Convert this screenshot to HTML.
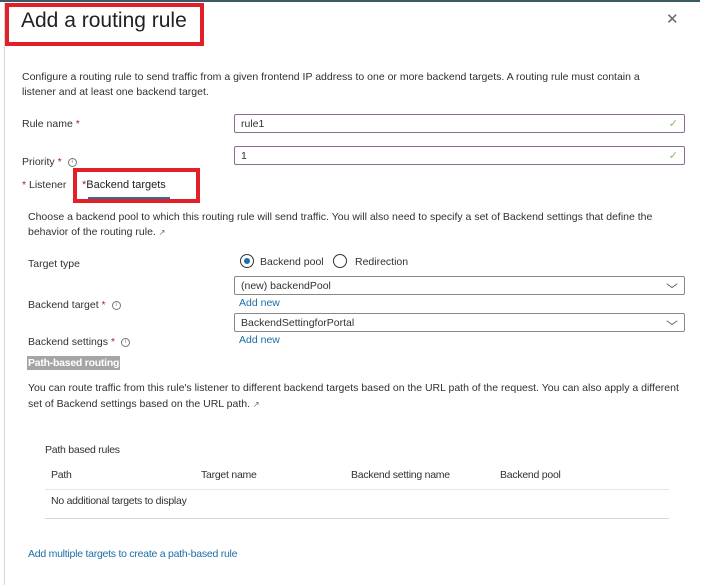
<!DOCTYPE html>
<html><head><meta charset="utf-8"><style>
*{margin:0;padding:0;box-sizing:border-box}
body{width:720px;height:585px;background:#fff;font-family:"Liberation Sans",sans-serif;color:#323130;position:relative;overflow:hidden;font-size:10.5px}
.a{position:absolute;white-space:nowrap}
.red{position:absolute;border:4px solid #e3202a}
.inp{position:absolute;border:1px solid #8a6e8f;height:19px;border-radius:2px;padding-left:6px;line-height:18px;font-size:10.5px}
.sel{position:absolute;border:1px solid #8a8886;height:19px;border-radius:2px;padding-left:6px;line-height:18px;font-size:10.5px}
.chk{position:absolute;right:6px;top:0;color:#8fb66a;font-size:11px}
.dd{position:absolute;right:8px;top:3px;width:8px;height:8px;border-right:1px solid #555;border-bottom:1px solid #555;transform:scaleY(0.7) rotate(45deg)}
.link{color:#1b6ea8}
.star{color:#a4262c}
.info{display:inline-block;width:9px;height:9px;border:1px solid #777;border-radius:50%;font-size:6px;line-height:7px;text-align:center;color:#777;vertical-align:middle;margin-left:6px}
.nar{font-size:10.5px;letter-spacing:-0.25px}
</style></head><body>
<div class="a" style="left:0;top:0;width:700px;height:2px;background:#3b5a66"></div>
<div class="a" style="left:4px;top:2px;width:1px;height:583px;background:#d8d8d8"></div>
<div class="red" style="left:5px;top:3px;width:199px;height:43px"></div>
<div class="a" style="left:21px;top:9px;font-size:21px;color:#222">Add a routing rule</div>
<div class="a" style="left:666px;top:10px;font-size:15px;color:#666;font-weight:300">✕</div>
<div class="a" style="left:22px;top:70px;line-height:15px;white-space:normal;width:650px">Configure a routing rule to send traffic from a given frontend IP address to one or more backend targets. A routing rule must contain a listener and at least one backend target.</div>
<div class="a" style="left:22px;top:118px">Rule name <span class="star">*</span></div>
<div class="inp" style="left:234px;top:114px;width:451px">rule1<span class="chk">✓</span></div>
<div class="a" style="left:22px;top:156px">Priority <span class="star">*</span><span class="info">i</span></div>
<div class="inp" style="left:234px;top:146px;width:451px">1<span class="chk">✓</span></div>
<div class="a" style="left:22px;top:179px"><span class="star">*</span> Listener</div>
<div class="red" style="left:73px;top:168px;width:127px;height:35px"></div>
<div class="a" style="left:82px;top:179px;color:#222;font-size:11px"><span class="star">*</span>Backend targets</div>
<div class="a" style="left:88px;top:197px;width:82px;height:2px;background:#2e6f8e"></div>
<div class="a" style="left:28px;top:210px;line-height:15px;white-space:normal;width:665px">Choose a backend pool to which this routing rule will send traffic. You will also need to specify a set of Backend settings that define the behavior of the routing rule. <span style="color:#666;font-size:8px">↗</span></div>
<div class="a" style="left:28px;top:258px">Target type</div>
<div class="a" style="left:240px;top:254px;width:14px;height:14px;border:1px solid #333;border-radius:50%"></div>
<div class="a" style="left:244px;top:258px;width:6px;height:6px;background:#1b6ea8;border-radius:50%"></div>
<div class="a" style="left:260px;top:256px">Backend pool</div>
<div class="a" style="left:333px;top:254px;width:14px;height:14px;border:1px solid #333;border-radius:50%"></div>
<div class="a" style="left:355px;top:256px">Redirection</div>
<div class="sel" style="left:234px;top:276px;width:451px">(new) backendPool<span class="dd"></span></div>
<div class="a link" style="left:239px;top:297px">Add new</div>
<div class="a" style="left:28px;top:299px">Backend target <span class="star">*</span><span class="info">i</span></div>
<div class="sel" style="left:234px;top:313px;width:451px">BackendSettingforPortal<span class="dd"></span></div>
<div class="a link" style="left:239px;top:334px">Add new</div>
<div class="a" style="left:28px;top:336px">Backend settings <span class="star">*</span><span class="info">i</span></div>
<div class="a nar" style="left:27px;top:356px;background:#a5a5a5;color:#fff;padding:1px 1px;font-weight:bold">Path-based routing</div>
<div class="a" style="left:28px;top:380px;line-height:16px;white-space:normal;width:662px;font-size:10.5px">You can route traffic from this rule's listener to different backend targets based on the URL path of the request. You can also apply a different set of Backend settings based on the URL path. <span style="color:#666;font-size:8px">↗</span></div>
<div class="a nar" style="left:45px;top:444px">Path based rules</div>
<div class="a nar" style="left:51px;top:469px">Path</div>
<div class="a nar" style="left:201px;top:469px">Target name</div>
<div class="a nar" style="left:351px;top:469px">Backend setting name</div>
<div class="a nar" style="left:500px;top:469px">Backend pool</div>
<div class="a" style="left:45px;top:489px;width:624px;height:1px;background:#e6e6e6"></div>
<div class="a nar" style="left:51px;top:495px">No additional targets to display</div>
<div class="a" style="left:45px;top:518px;width:624px;height:1px;background:#d6d6d6"></div>
<div class="a nar link" style="left:28px;top:548px">Add multiple targets to create a path-based rule</div>
</body></html>
